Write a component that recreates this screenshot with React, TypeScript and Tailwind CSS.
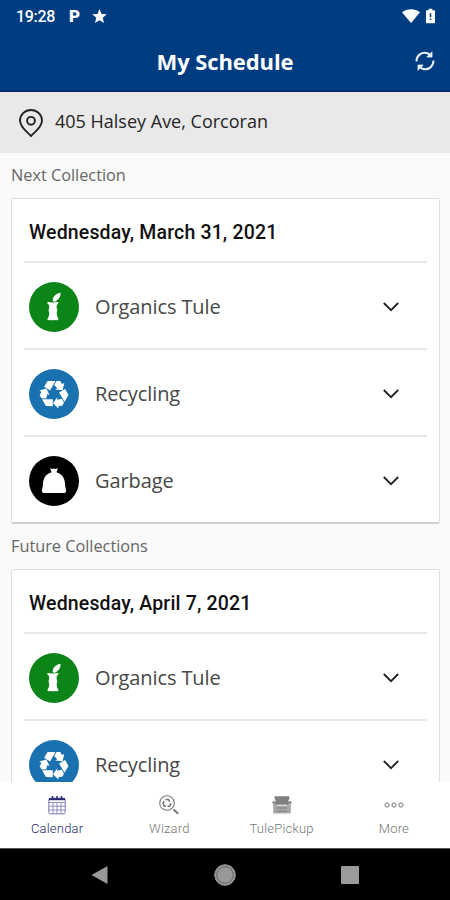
import { useState } from 'react';

type Kind = 'organics' | 'recycling' | 'garbage';

interface Collection {
    date: string;
    items: Kind[];
}

const nextCollection: Collection = {
    date: 'Wednesday, March 31, 2021',
    items: ['organics', 'recycling', 'garbage'],
};

const futureCollection: Collection = {
    date: 'Wednesday, April 7, 2021',
    items: ['organics', 'recycling'],
};

const kinds = {
    organics: { label: 'Organics Tule', color: 'bg-[#0b8418]' },
    recycling: { label: 'Recycling', color: 'bg-[#1a71af]' },
    garbage: { label: 'Garbage', color: 'bg-black' },
};

const AppleCoreIcon = () => (
    <svg width="16" height="30" viewBox="0 0 16 30" fill="white">
        <path d="M6.800 9.600C6.300 5.500 8.800 2 14.500.8c.3 3.600-1.700 7.300-5.700 8.900z" />
        <path d="M1.300 10.300c1.400-.7 2.800-.2 4.200.3h2.200c1.400-.6 3-1 4.700-.3.2 1.200-.4 2-1.500 2.400-.4 1.700-.4 3.100 0 4.400.6.700.6 2-.1 2.800-.1 2.200.1 4 .8 5.300l1.100 2.600c-1.300.6-2.500.5-3.500.1-1.500.3-3.200.3-4.700 0-1 .4-2.100.5-3.300-.1l1.100-2.600c.9-1.700 1-3.500.8-5.300-.8-.8-.8-2-.1-2.800.4-1.500.3-2.900-.1-4.400-1.200-.4-1.700-1.200-1.600-2.400z" />
    </svg>
);

// one folded arrow, turned three times around the centre
const recycleArm = (
    <>
        <path d="M-9.900-7.200L-6.400-13H1.400L-3.900-3.600z" />
        <path d="M.1-9.100L2.500-13H6.200L8-9.900l2.300-1.100L8.600-3.800 1.200-4.400 3.300-5.700z" />
    </>
);

const RecycleIcon = () => (
    <svg width="30" height="28" viewBox="-15 -14 30 28" fill="white">
        <g>{recycleArm}</g>
        <g transform="rotate(120)">{recycleArm}</g>
        <g transform="rotate(240)">{recycleArm}</g>
    </svg>
);

const BagIcon = () => (
    <svg width="26" height="26" viewBox="0 0 26 26" fill="white">
        <path d="M9 .3l2.300.7L13 .4l1.700.6 2.300-.7-1.300 3v1.300c4.600 1.100 7.600 4.900 8.200 9.900.2 3.300.6 5.700 1.300 8.300l-1 2.200H1.800l-1-2.200c.7-2.600 1.100-5 1.300-8.300.6-5 3.600-8.800 8.200-9.900V3.300z" />
    </svg>
);

const KindIcon = ({ kind }: { kind: Kind }) => (
    <div className={`flex h-[50px] w-[50px] shrink-0 items-center justify-center rounded-full ${kinds[kind].color}`}>
        {kind === 'organics' && <AppleCoreIcon />}
        {kind === 'recycling' && <RecycleIcon />}
        {kind === 'garbage' && <BagIcon />}
    </div>
);

const CollectionCard = ({ date, items }: Collection) => {
    const [open, setOpen] = useState<Kind | null>(null);

    return (
        <div className="ml-[11px] mr-[10px] rounded-[2px] border border-b-2 border-[#dedede] border-b-[#d0d0d0] bg-white px-3">
            <h2 className="flex h-[62px] items-center pl-[5px] pt-[5px] font-[Roboto,sans-serif] text-[19.500px] font-medium tracking-[0.16px] text-[#111]">
                {date}
            </h2>
            {items.map((kind) => (
                <button
                    key={kind}
                    onClick={() => setOpen(open === kind ? null : kind)}
                    className="flex h-[87px] w-full items-center border-t-2 border-[#e8e8e8] pl-[5px] pr-[28px] pt-[3px] text-left"
                >
                    <KindIcon kind={kind} />
                    <span className="ml-4 flex-1 text-[20px] tracking-[-0.1px] text-[#484848]">{kinds[kind].label}</span>
                    <svg width="16" height="10" viewBox="0 0 16 10" fill="none" stroke="#222" strokeWidth="1.800">
                        <path d="M.8 1l7.200 7.200L15.200 1" />
                    </svg>
                </button>
            ))}
        </div>
    );
};

const CalendarIcon = () => (
    <svg width="18" height="20" viewBox="0 0 18 20" fill="none" stroke="#7577b5">
        <rect x=".8" y="3.200" width="16.400" height="15.600" rx="1.500" />
        <path d="M1 7.500h16M1 11.200h16M1 15h16M5 7.500v11M9 7.500v11M13 7.500v11" strokeWidth=".8" />
        <path d="M1 4.200h16" stroke="#25286f" strokeWidth="2" />
        <path d="M4.500 1v3.500M9 1v3.500M13.500 1v3.500" stroke="#25286f" strokeWidth="1.500" />
    </svg>
);

const WizardIcon = () => (
    <svg width="20" height="20" viewBox="0 0 20 20" fill="none" stroke="#777">
        <circle cx="8" cy="8" r="7.300" strokeWidth="1.100" />
        <path d="M6.500 4.500h3l1.200 2.200M12 8.300l-1.300 3H8.500M7 11.300H5.300L4 8.300l1.200-2" strokeWidth="1.600" />
        <path d="M14.500 14.500l4.700 4.300" strokeWidth="2" />
    </svg>
);

const ChairIcon = () => (
    <svg width="20" height="18" viewBox="0 0 20 18">
        <path d="M2.800.3h14.400l.4 1.500-1.600 4v3H4v-3l-1.600-4z" fill="#808080" />
        <path d="M.3 6.300l1.300-.8h1.600L4.800 9h10.400l1.600-3.500h1.600l1.300.8-.9 3.200v8H1.200v-8z" fill="#a8a8a8" />
        <path d="M4.800 9.400h10.400" stroke="#eee" strokeWidth=".8" />
        <path d="M4.800 12h10.400M4.800 15.200h10.400" stroke="#777" strokeWidth=".9" />
        <path d="M.3 6.600l1.300-.8h1.600l1.300 3M19.700 6.600l-1.300-.8h-1.600l-1.300 3" stroke="#707070" fill="none" />
    </svg>
);

const MoreIcon = () => (
    <svg width="20" height="6" viewBox="0 0 20 6" fill="none" stroke="#777">
        <circle cx="3" cy="3" r="2.100" />
        <circle cx="10" cy="3" r="2.100" />
        <circle cx="17" cy="3" r="2.100" />
    </svg>
);

const tabs = [
    { label: 'Calendar', icon: <CalendarIcon /> },
    { label: 'Wizard', icon: <WizardIcon /> },
    { label: 'TulePickup', icon: <ChairIcon /> },
    { label: 'More', icon: <MoreIcon /> },
];

export default function App() {
    const [active, setActive] = useState('Calendar');

    return (
        <div className="flex h-[900px] w-[450px] flex-col overflow-hidden bg-[#fafafa] font-['Open_Sans',sans-serif]">
            <header className="h-[92px] shrink-0 border-b-2 border-[#002b72] bg-[#003d80] text-white">
                <div className="flex h-8 items-center pl-4 pr-[15px]">
                    <span className="pt-px font-[Roboto,sans-serif] text-[16px] font-medium tracking-[-0.3px]">19:28</span>
                    <span className="ml-[14px] w-3 pt-px font-[Roboto,sans-serif] text-[17px] font-black leading-none">P</span>
                    <svg className="ml-[11px]" width="15" height="14" viewBox="0 0 24 23" fill="white">
                        <path d="M12 0l3.300 8.100 8.700.7-6.700 5.600L19.500 23 12 18.300 4.500 23l2.200-8.600L0 8.800l8.700-.7z" />
                    </svg>
                    <svg className="ml-auto" width="18" height="14" viewBox="0 0 18 14" fill="white">
                        <path d="M0 3.300C5-.8 13-.8 18 3.300L9 14z" />
                    </svg>
                    <svg className="ml-[6px]" width="9" height="16" viewBox="0 0 10 16">
                        <path d="M3 0h4v1.500h2c.6 0 1 .4 1 1V15c0 .6-.4 1-1 1H1c-.6 0-1-.4-1-1V2.500c0-.6.4-1 1-1h2z" fill="white" />
                        <path d="M5 5v4.500M5 10.700v1.800" stroke="#003d80" strokeWidth="1.700" />
                    </svg>
                </div>
                <div className="grid h-[58px] grid-cols-[1fr_auto_1fr] items-center pr-[15px]">
                    <h1 className="col-start-2 pl-[15px] text-[22px] font-bold tracking-[-0.1px]">My Schedule</h1>
                    <button className="justify-self-end">
                        <svg width="20" height="20" viewBox="0 0 20 20" fill="none" stroke="#e8f0fb" strokeWidth="2">
                            <path d="M1.500 10.500C1.300 4.500 7 .2 12.500 2.200l3 2M18.500 9.500C18.700 15.500 13 19.800 7.500 17.800l-3-2" />
                            <path d="M17 .8v5.200h-5.200zM3 19.200V14h5.200z" fill="#e8f0fb" strokeWidth=".8" />
                        </svg>
                    </button>
                </div>
            </header>

            <div className="flex h-[61px] shrink-0 items-center bg-[#e9e9e9] pl-[19px]">
                <svg width="24" height="28" viewBox="0 0 24 28" fill="none" stroke="#222" strokeWidth="1.900">
                    <path d="M12 1C5.800 1 1 5.700 1 11.600 1 18.500 8 22.700 12 27c4-4.300 11-8.500 11-15.400C23 5.700 18.200 1 12 1z" />
                    <circle cx="12" cy="11.800" r="3.900" />
                </svg>
                <span className="ml-3 pb-[2px] text-[18px] text-[#252525]">405 Halsey Ave, Corcoran</span>
            </div>

            <main className="min-h-0 flex-1 overflow-hidden">
                <p className="flex h-[45px] items-center pl-[11px] text-[16.300px] text-[#666]">Next Collection</p>
                <CollectionCard {...nextCollection} />
                <p className="flex h-[45px] items-center pl-[11px] text-[16.300px] text-[#666]">Future Collections</p>
                <CollectionCard {...futureCollection} />
            </main>

            <nav className="grid h-[66px] shrink-0 grid-cols-4 bg-white pl-px">
                {tabs.map(({ label, icon }) => (
                    <button
                        key={label}
                        onClick={() => setActive(label)}
                        className={`flex flex-col items-center pt-3 font-[Roboto,sans-serif] text-[13px] font-light leading-4 ${active === label ? 'text-[#25286f]' : 'text-[#777]'}`}
                    >
                        <span className="flex h-[22px] items-center">{icon}</span>
                        <span className="mt-[5px] tracking-[0.2px]">{label}</span>
                    </button>
                ))}
            </nav>

            {/* Android navigation */}
            <div className="flex h-[52px] shrink-0 items-center justify-between border-t border-[#555] bg-black px-[91px]">
                <svg width="17" height="20" viewBox="0 0 17 20" fill="#999">
                    <path d="M16.500 1v18L.5 10z" />
                </svg>
                <svg width="22" height="22" viewBox="0 0 22 22" fill="#999" stroke="#999">
                    <circle cx="11" cy="11" r="10.300" />
                    <circle cx="11" cy="11" r="8.300" stroke="#555" strokeWidth=".8" />
                </svg>
                <div className="h-[18px] w-[18px] rounded-[1px] bg-[#9b9b9b]" />
            </div>
        </div>
    );
}
